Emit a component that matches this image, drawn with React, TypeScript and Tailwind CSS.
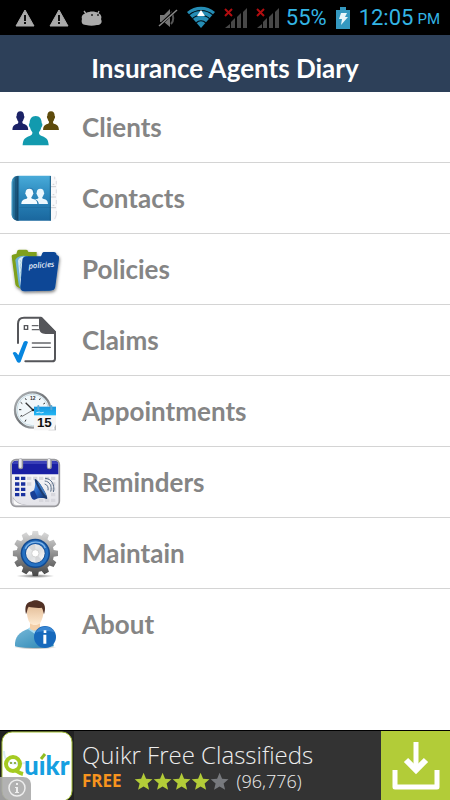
import type { ReactNode } from "react";

const STAR = "M12 1l3.1 7.4 8 .7-6.1 5.3 1.9 7.8L12 18l-6.9 4.2L7 14.4.9 9.1l8-.7z";
const PERSON =
  "M0-56c9 0 13 6 13 14 2 0 2 6-1 8-1 4-3 7-5 9 0 4 1 5 6 7 9 3 14 5 15 18h-56c1-13 6-15 15-18 5-2 6-3 6-7-2-2-4-5-5-9-3-2-3-8-1-8 0-8 4-14 13-14z";

const ClientsIcon = () => (
  <svg viewBox="24 0 168 210" className="h-[70px] w-14 shrink-0" aria-hidden="true">
    <path d={PERSON} fill="#1b2266" transform="translate(61 114) scale(.85 1)" />
    <path d={PERSON} fill="#5e4b0c" transform="translate(153 114) scale(.85 1)" />
    <path d={PERSON} fill="#fff" transform="translate(107 162) scale(1.5 1.66)" />
    <path d={PERSON} fill="#129aae" transform="translate(107 160) scale(1.4 1.57)" />
  </svg>
);

const ContactsIcon = () => (
  <svg viewBox="24 213 168 210" className="h-[70px] w-14 shrink-0" aria-hidden="true">
    <defs>
      <linearGradient id="book" x1="0" y1="0" x2="0" y2="1">
        <stop offset="0" stopColor="#49abd9" />
        <stop offset=".45" stopColor="#2b88bd" />
        <stop offset="1" stopColor="#1a679e" />
      </linearGradient>
      <linearGradient id="spine" x1="0" x2="1">
        <stop offset="0" stopColor="#4ba6cf" />
        <stop offset=".5" stopColor="#175278" />
        <stop offset=".8" stopColor="#123f60" />
        <stop offset="1" stopColor="#2b7eae" />
      </linearGradient>
    </defs>
    <path d="M145 252h12c9 0 14 7 14 16v102c0 9-5 16-14 16h-12z" fill="#f9f9fb" />
    <path d="M153 284h15M153 315h15M153 347h15M158 277h5M158 308h5M158 340h5" stroke="#b9b9be" strokeWidth="2" />
    <path d="M164 254v8m5 5v10M169 292v12M169 324v12M169 357v11l-5 13" fill="none" stroke="#d0d0d6" strokeWidth="2" />
    <path d="M58 251h94v135H54c-12 0-19-8-19-19v-95c0-13 8-21 23-21z" fill="url(#book)" />
    <path d="M50 252c-10 2-15 9-15 20v95c0 10 6 17 15 19h8V252z" fill="url(#spine)" opacity=".8" />
    <path d="M40 268v106M46 260v122M52 256v128" stroke="#0f3957" strokeWidth="2" opacity=".4" />
    <path d="M58 346h93" stroke="#155a89" strokeWidth="2" opacity=".5" />
    <path d={PERSON} fill="#e9f6fd" transform="translate(121 336) scale(.82)" />
    <path d={PERSON} fill="#2b7fb3" transform="translate(90 338) scale(.95 .9)" />
    <path d={PERSON} fill="#f4fbff" transform="translate(88 336) scale(.86 .82)" />
    <path d="M151 252v134" stroke="#145984" strokeWidth="3" />
  </svg>
);

const PoliciesIcon = () => (
  <svg viewBox="24 0 168 210" className="h-[70px] w-14 shrink-0" aria-hidden="true">
    <defs>
      <filter id="folderShadow" x="-20%" y="-20%" width="140%" height="140%">
        <feDropShadow dx="2" dy="5" stdDeviation="4" floodOpacity=".5" />
      </filter>
    </defs>
    <g filter="url(#folderShadow)">
      <path d="M35 67c0-5 4-6 14-7l3-10c1-3 3-3 8-3h18c5 0 6 3 7 7h25v30L66 164c-14-3-19-8-20-14z" fill="#7fa01b" />
      <path d="M46 78c3-8 9-11 24-13l14 1-14 98c-8 0-12-5-14-12z" fill="#6db1d9" />
      <path d="M54 80c3-9 8-12 20-12l-6 92c-4-2-6-5-7-10z" fill="#d8ecf4" />
      <path d="M60 78l4 8-4 10 4 12-4 12 2 14" fill="none" stroke="#8bbfd4" strokeWidth="2" />
      <path d="M67 78c1-7 5-11 13-11h43l3-7c1-4 3-6 8-6h27c6 0 8 4 9 9 6 1 8 5 7 11l-11 83c-1 10-6 13-16 13l-76 2c-9 0-13-4-13-13z" fill="#084796" />
    </g>
    <text x="86" y="104" transform="rotate(-4 86 104)" fontFamily="Noto Sans, sans-serif" fontSize="23" fontStyle="italic" fontWeight="500" fill="#eef5ff">
      policies
    </text>
  </svg>
);

const ClaimsIcon = () => (
  <svg viewBox="24 213 168 210" className="h-[70px] w-14 shrink-0" aria-hidden="true">
    <path d="M54 327v-57c0-13 7-19 18-19h51l42 43v80c0 6-3 8-9 8H76" fill="none" stroke="#55565a" strokeWidth="6" strokeLinecap="round" strokeLinejoin="round" />
    <path d="M117 250h9l42 43v7h-31c-13 0-20-7-20-20z" fill="#55565a" />
    <path d="M73 275h10v11H73z" fill="none" stroke="#55565a" strokeWidth="4" />
    <path d="M97 275h17M97 287h20M97 327h54M97 340h54" stroke="#66676b" strokeWidth="4" strokeLinecap="round" />
    <path d="M38 357c4-4 8-4 12 0l5 7 16-40c3-4 9-4 13 0L62 383c-2 4-8 4-11 0z" fill="#0786df" />
  </svg>
);

const AppointmentsIcon = () => (
  <svg viewBox="24 0 168 210" className="h-[70px] w-14 shrink-0" aria-hidden="true">
    <defs>
      <linearGradient id="clockRim" x1="0" y1="0" x2="1" y2="1">
        <stop offset="0" stopColor="#b9bdc0" />
        <stop offset=".5" stopColor="#6f7377" />
        <stop offset="1" stopColor="#c9cccf" />
      </linearGradient>
      <linearGradient id="calTop" x1="0" y1="0" x2="0" y2="1">
        <stop offset="0" stopColor="#1995dd" />
        <stop offset="1" stopColor="#23b8f5" />
      </linearGradient>
    </defs>
    <circle cx="98" cy="102" r="53" fill="#f1f7fa" stroke="url(#clockRim)" strokeWidth="7" />
    <circle cx="98" cy="102" r="47" fill="none" stroke="#c7dbe4" strokeWidth="3" />
    <g stroke="#333" strokeWidth="3">
      <path d="M76 67l3 5M62 79l5 4M57 101h7M61 121l5-3M75 137l3-6M121 67l-3 5M135 81l-5 3" />
      <path d="M77 80l22 22" strokeWidth="4" />
      <path d="M99 102l-34 20" strokeWidth="2" />
    </g>
    <text x="98" y="72" textAnchor="middle" fontFamily="Liberation Sans, sans-serif" fontSize="15" fontWeight="700" fill="#333">
      12
    </text>
    <circle cx="99" cy="102" r="4" fill="#222" />
    <path d="M102 92h66v71h-66z" fill="#f5f5f5" />
    <path d="M102 92h66v26h-66z" fill="url(#calTop)" />
    <path d="M109 110l10-2 3 3 9-2" fill="none" stroke="#c4ecff" strokeWidth="3" />
    <path d="M115 90v10M154 90v10" stroke="#58a9d5" strokeWidth="6" strokeLinecap="round" />
    <path d="M168 145v18h-24c13-2 20-8 24-18z" fill="#b7b9bb" />
    <path d="M162 147c0 7-7 12-14 14h16z" fill="#fff" />
    <text x="133" y="154" textAnchor="middle" fontFamily="Liberation Sans, sans-serif" fontSize="40" fontWeight="700" fill="#111">
      15
    </text>
  </svg>
);

const RemindersIcon = () => (
  <svg viewBox="24 213 168 210" className="h-[70px] w-14 shrink-0" aria-hidden="true">
    <defs>
      <linearGradient id="horn" x1="0" y1="0" x2="1" y2="1">
        <stop offset="0" stopColor="#5b9fe8" />
        <stop offset=".45" stopColor="#2463c4" />
        <stop offset="1" stopColor="#102a5c" />
      </linearGradient>
      <linearGradient id="calPage" x1="0" y1="0" x2="0" y2="1">
        <stop offset="0" stopColor="#fff" />
        <stop offset="1" stopColor="#e2e2e8" />
      </linearGradient>
    </defs>
    <rect x="33" y="251" width="145" height="140" rx="15" fill="url(#calPage)" stroke="#9a9a9e" strokeWidth="5" />
    <path d="M36 295v-29c0-8 5-12 13-12h114c8 0 12 4 12 12v29z" fill="#1a20a4" />
    <path d="M37 264c2-6 6-9 12-9h114c6 0 10 3 12 9z" fill="#3a40b8" />
    <path d="M62 255v17M148 255v17" stroke="#96979c" strokeWidth="15" strokeLinecap="round" />
    <path d="M61 252v20M147 252v20" stroke="#e8e8ed" strokeWidth="8" strokeLinecap="round" />
    <path d="M45 302h13v10H45zM63 302h13v10H63zM45 319h13v10H45zM63 319h13v10H63zM45 335h13v10H45zM63 335h13v10H63zM45 351h13v10H45zM63 351h13v10H63z" fill="#1a319f" />
    <path d="M81 302h13v10H81zM99 302h13v10H99zM117 302h13v10h-13zM135 302h13v10h-13zM153 302h13v10h-13zM81 319h13v10H81zM153 319h13v10h-13zM153 335h13v10h-13zM153 351h13v10h-13zM117 368h13v10h-13zM135 368h13v10h-13zM153 368h13v10h-13z" fill="#d7d7dd" />
    <path d="M38 360c5 14 20 25 43 27H49c-8 0-11-4-11-10z" fill="#b5b5bc" />
    <path d="M40 368c7 10 18 17 32 19H50c-7 0-10-3-10-9z" fill="#fafafa" />
    <path d="M91 349l14-8 12 24-13 6c-5 1-8-2-10-7-3-6-4-11-3-15z" fill="#173f96" />
    <path d="M104 309l37 60c-10-4-18-3-27-2l-12-25c4-10 4-20 2-33z" fill="url(#horn)" />
    <ellipse cx="123" cy="339" rx="6" ry="35" transform="rotate(-31 123 339)" fill="#1d3c70" />
    <ellipse cx="126" cy="338" rx="3" ry="26" transform="rotate(-31 126 338)" fill="#4379bd" />
    <path d="M134 324c8 2 12 10 10 19M134 315c15 1 23 15 18 32M135 307c19 0 31 20 25 41" fill="none" stroke="#5a708a" strokeWidth="3" />
  </svg>
);

const gearTeeth = [0, 30, 60, 90, 120, 150, 180, 210, 240, 270, 300, 330];

const MaintainIcon = () => (
  <svg viewBox="24 0 168 210" className="h-[70px] w-14 shrink-0" aria-hidden="true">
    <defs>
      <linearGradient id="steel" gradientUnits="userSpaceOnUse" x1="106" y1="38" x2="106" y2="175">
        <stop offset="0" stopColor="#dedede" />
        <stop offset=".5" stopColor="#929292" />
        <stop offset="1" stopColor="#444" />
      </linearGradient>
      <linearGradient id="hub" x1="0" y1="0" x2="1" y2="1">
        <stop offset="0" stopColor="#f8f8f8" />
        <stop offset=".5" stopColor="#dcdee0" />
        <stop offset="1" stopColor="#fff" />
      </linearGradient>
      <radialGradient id="gearShadow">
        <stop offset="0" stopColor="#555" stopOpacity=".8" />
        <stop offset="1" stopColor="#555" stopOpacity="0" />
      </radialGradient>
      <clipPath id="gearShape">
        <circle cx="106" cy="106" r="56" />
        {gearTeeth.map((deg) => (
          <path key={deg} d="M95 55l3-17h16l3 17z" transform={`rotate(${deg} 106 106)`} />
        ))}
      </clipPath>
    </defs>
    <ellipse cx="106" cy="174" rx="58" ry="6" fill="url(#gearShadow)" />
    <path d="M30 30h152v152H30z" fill="url(#steel)" clipPath="url(#gearShape)" />
    <circle cx="106" cy="106" r="44" fill="#134b91" />
    <circle cx="106" cy="106" r="35" fill="none" stroke="#2671c2" strokeWidth="9" />
    <path d="M76 92c9-24 50-28 60-2" fill="none" stroke="#83b6e7" strokeWidth="4" />
    <circle cx="106" cy="106" r="28" fill="url(#hub)" />
    <path d="M106 106l-20-18c6-7 13-9 20-9zM106 106l20 20c-6 6-13 8-20 8z" fill="#bfc2c6" opacity=".5" />
    <circle cx="106" cy="106" r="11" fill="#fff" stroke="#d3d3d3" strokeWidth="3" />
  </svg>
);

const AboutIcon = () => (
  <svg viewBox="24 213 168 210" className="h-[70px] w-14 shrink-0" aria-hidden="true">
    <defs>
      <linearGradient id="skin" x1="0" y1="0" x2="0" y2="1">
        <stop offset="0" stopColor="#e0b790" />
        <stop offset="1" stopColor="#ffebd2" />
      </linearGradient>
      <linearGradient id="shirt" x1="0" y1="0" x2="1" y2="1">
        <stop offset="0" stopColor="#76b8d8" />
        <stop offset="1" stopColor="#2985b3" />
      </linearGradient>
      <radialGradient id="personShadow">
        <stop offset="0" stopColor="#333" stopOpacity=".7" />
        <stop offset="1" stopColor="#333" stopOpacity="0" />
      </radialGradient>
    </defs>
    <ellipse cx="106" cy="388" rx="64" ry="6" fill="url(#personShadow)" />
    <path d="M45 385c-2-29 13-43 41-53h36c25 7 38 25 39 53-24 6-90 7-116 0z" fill="url(#shirt)" />
    <path d="M83 333l7-5 15 10 15-10 7 6-21 15z" fill="#a9dbf2" />
    <path d="M90 316h30v16c-4 7-24 7-30 0z" fill="#f4cfa8" />
    <path d="M80 272c0-13 8-18 25-18 18 0 27 6 26 20 0 18-4 31-10 40-7 9-23 10-31 1-7-9-10-25-10-43z" fill="url(#skin)" />
    <path d="M78 289c-5-24 1-37 18-39 7-6 20-3 27 1 12 5 15 18 9 38-3-9-3-15-7-20-13 2-29-1-39-3-5 7-4 15-8 23z" fill="#513125" />
    <circle cx="135" cy="357" r="33" fill="#1769bc" />
    <path d="M108 344c8-22 45-25 55-1-17-5-35-5-55 1z" fill="#3986d2" />
    <path d="M131 337h8v8h-8zM130 350h9v27h-9z" fill="#fff" />
  </svg>
);

const menuItems: { label: string; icon: ReactNode }[] = [
  { label: "Clients", icon: <ClientsIcon /> },
  { label: "Contacts", icon: <ContactsIcon /> },
  { label: "Policies", icon: <PoliciesIcon /> },
  { label: "Claims", icon: <ClaimsIcon /> },
  { label: "Appointments", icon: <AppointmentsIcon /> },
  { label: "Reminders", icon: <RemindersIcon /> },
  { label: "Maintain", icon: <MaintainIcon /> },
  { label: "About", icon: <AboutIcon /> },
];

const WarningIcon = () => (
  <svg viewBox="0 0 20 18" className="h-[18px] w-5" aria-hidden="true">
    <path d="M10 1l9 16H1z" fill="#aaa" stroke="#aaa" strokeLinejoin="round" />
    <path d="M9 6h2v6H9zM9 13h2v2H9z" fill="#111" />
  </svg>
);

const NoSignalIcon = () => (
  <svg viewBox="0 0 24 22" className="h-[22px] w-6" aria-hidden="true">
    <path d="M1 21l5-4v4zM7 15l4-4v10H7zM13 10l4-4v15h-4zM19 5l4-4v20h-4z" fill="#484848" />
    <path d="M1 2l7 7M8 2L1 9" stroke="#b20d10" strokeWidth="2" />
  </svg>
);

const StatusBar = () => (
  <div className="flex h-[35px] items-center justify-between bg-black pr-2.5 pl-[15px] font-['Roboto',sans-serif] text-[#33b5e5]">
    <div className="flex items-center gap-3">
      <WarningIcon />
      <div className="pl-0.5">
        <WarningIcon />
      </div>
      <svg viewBox="0 0 22 18" className="h-[18px] w-[22px]" aria-hidden="true">
        <path d="M3 2l3 4M18 2l-2 4" stroke="#aaa" strokeWidth="1.3" />
        <path d="M5 4c4-2 9-2 12 0 3 1 4 4 3 6 2 4-1 6-4 6-4 1-7 1-11 0-4 0-5-3-4-6-1-3 1-5 4-6z" fill="#aaa" />
        <circle cx="11" cy="6" r="1" fill="#222" />
        <circle cx="17" cy="6" r="1" fill="#222" />
      </svg>
    </div>
    <div className="flex items-center">
      <svg viewBox="0 0 20 20" className="h-5 w-5" aria-hidden="true">
        <path d="M2 7h4l6-6v18l-6-5H2z" fill="#777" />
        <path d="M13 4c3 3 3 9 0 12" fill="none" stroke="#555" strokeWidth="2" />
        <path d="M18 2L1 18" stroke="#000" strokeWidth="3" />
        <path d="M19 2L1 18" stroke="#888" strokeWidth="1.5" />
      </svg>
      <svg viewBox="0 0 30 23" className="ml-2 h-[23px] w-[30px]" aria-hidden="true">
        <path d="M1 6C9-1 21-1 29 6L15 22z" fill="#258db5" />
        <path d="M3 9c7-6 17-6 24 0M6 13c5-5 13-5 18 0M10 17c3-3 7-3 10 0" fill="none" stroke="#001018" strokeWidth="1.2" />
        <path d="M15 4l4 6h-8z" fill="#fff" />
      </svg>
      <div className="ml-2 flex gap-2">
        <NoSignalIcon />
        <NoSignalIcon />
      </div>
      <span className="ml-1.5 text-[22px] leading-8">55%</span>
      <svg viewBox="0 0 16 22" className="ml-2 h-[22px] w-4" aria-hidden="true">
        <path d="M1 3h4V0h6v3h4v19H1z" fill="#3498c0" />
        <path d="M6 6h6l-2 4h3l-7 8 1-6H4z" fill="#e8f5fa" />
      </svg>
      <span className="ml-2 text-[22px] leading-8">12:05</span>
      <span className="ml-1 pt-1 text-[15px]">PM</span>
    </div>
  </div>
);

const AdBanner = () => (
  <aside className="mt-auto flex h-[70px] border-t border-black bg-[#333]">
    <svg viewBox="0 0 74 69" className="h-[69px] w-[74px] shrink-0" aria-hidden="true">
      <path d="M0 0h74v69H0z" fill="#222" />
      <rect x="2" y="1" width="70" height="69" rx="10" fill="#fff" stroke="#a2bd32" />
      <path d="M4 20c0 12 8 14 21 12" fill="none" stroke="#dceef4" strokeWidth="2" />
      <circle cx="13" cy="33" r="7" fill="none" stroke="#a5cb22" strokeWidth="4" />
      <path d="M15 39c2 1 4 3 8 4" stroke="#a5cb22" strokeWidth="4" />
      <circle cx="11" cy="32" r="1" fill="#789b16" />
      <circle cx="15" cy="32" r="1" fill="#789b16" />
      <text x="24" y="44" fontFamily="Lato, sans-serif" fontSize="26" fontWeight="900" fill="#169fe1">
        uıkr
      </text>
      <path d="M41 28l4-5" stroke="#91bd20" strokeWidth="3" />
      <path d="M0 46h23c5 0 8 3 8 8v15H0z" fill="#aaa" opacity=".9" />
      <circle cx="17" cy="57" r="8" fill="none" stroke="#eee" strokeWidth="1.5" />
      <path d="M16 52h2v2h-2zM15 56h3v5h1v1h-4v-1h1v-4h-1z" fill="#eee" />
    </svg>
    <div className="flex-1 pl-2 font-['Open_Sans',sans-serif] text-[#eee]">
      <p className="pt-2 text-2xl leading-8 font-light whitespace-nowrap">Quikr Free Classifieds</p>
      <div className="flex items-start leading-5">
        <span className="text-[17px] leading-5 font-bold text-[#f7941e]">FREE</span>
        <svg viewBox="0 0 95 22" className="ml-3 h-[22px] w-[95px]" role="img" aria-label="4 out of 5 stars">
          {[0, 1, 2, 3, 4].map((n) => (
            <path key={n} d={STAR} fill={n < 4 ? "#b3cc38" : "#77797d"} transform={`translate(${n * 19} 1) scale(.8)`} />
          ))}
        </svg>
        <span className="ml-2 text-[18px] leading-5 font-light">(96,776)</span>
      </div>
    </div>
    <button aria-label="Download" className="flex w-[69px] items-start justify-center bg-[#b2cc38] pt-2">
      <svg viewBox="0 0 50 52" className="h-[52px] w-[50px]" fill="none" stroke="#fff" aria-hidden="true">
        <path d="M25 3v28" strokeWidth="5" />
        <path d="M15 21l10 10 10-10" strokeWidth="6" />
        <path d="M4 31v17h42V31" strokeWidth="5" strokeLinejoin="round" />
      </svg>
    </button>
  </aside>
);

const App = () => {
  return (
    <div className="flex min-h-screen flex-col bg-white">
      <StatusBar />
      <header className="flex h-[57px] items-center justify-center bg-[#2d4059] pt-2 font-['Lato',sans-serif]">
        <h1 className="text-[26px] leading-8 font-bold text-white">Insurance Agents Diary</h1>
      </header>
      <nav className="font-['Lato',sans-serif]">
        <ul className="divide-y divide-[#d4d4d4]">
          {menuItems.map((item) => (
            <li key={item.label}>
              <button className="flex h-[70px] w-full items-center gap-[18px] pl-2 text-left text-[26px] leading-8 font-bold text-[#858585]">
                {item.icon}
                <span>{item.label}</span>
              </button>
            </li>
          ))}
        </ul>
      </nav>
      <AdBanner />
    </div>
  );
};

export default App;
